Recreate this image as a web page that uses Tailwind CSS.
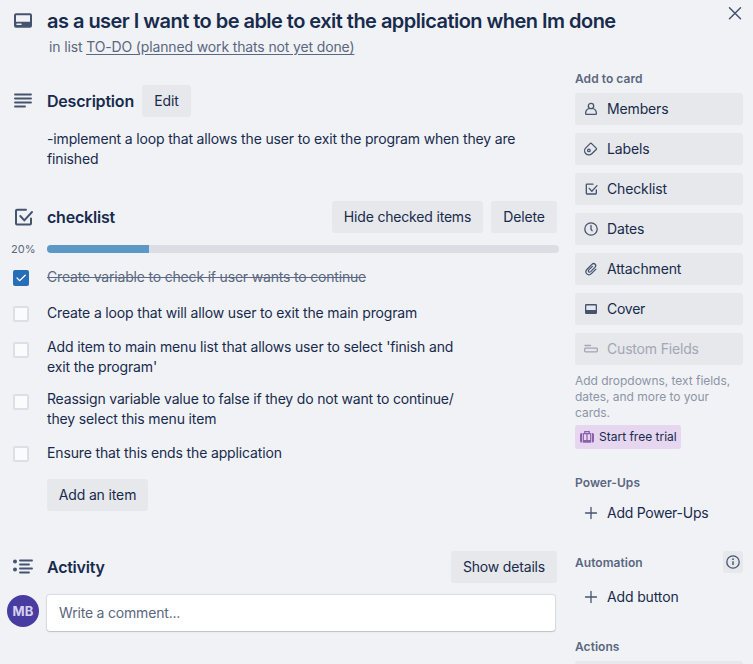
<!DOCTYPE html>
<html lang="en">
<head>
<meta charset="utf-8">
<title>Card details</title>
<script src="https://cdn.jsdelivr.net/npm/@tailwindcss/browser@4"></script>
</head>
<body class="bg-[#f1f2f6]">
<svg class="hidden">
  <symbol id="check" viewBox="0 0 24 24"><path d="M15 4.800H6a1 1 0 0 0-1 1v12.700a1 1 0 0 0 1 1h13a1 1 0 0 0 1-1V13.500M9.300 11l4 4.400L21 7" fill="none" stroke="currentColor" stroke-width="2" stroke-linecap="round" stroke-linejoin="round"/></symbol>
  <symbol id="plus" viewBox="0 0 16 16"><path d="M8 2.500v11M2.500 8h11" fill="none" stroke="currentColor" stroke-width="1.300" stroke-linecap="round"/></symbol>
</svg>
<div class="flex h-[664px] w-[753px] overflow-hidden bg-[#f1f2f6] font-['Inter','Liberation_Sans',sans-serif] text-sm leading-5 tracking-[-0.14px] whitespace-nowrap text-[#172b4d]">
  <main class="w-[575px] shrink-0">
    <header class="flex h-[85px] pl-[11px]">
      <svg class="mt-2 size-6 shrink-0 text-[#44546f]" viewBox="0 0 24 24"><path fill="currentColor" fill-rule="evenodd" d="M5 5.200h14a2 2 0 0 1 2 2V17.700a2 2 0 0 1-2 2H5a2 2 0 0 1-2-2V7.200a2 2 0 0 1 2-2zM5 7.200h14v6.600H5zM6 15.500h4a.7.700 0 0 1 0 1.500H6a.7.700 0 0 1 0-1.500z"/></svg>
      <div class="pt-[9px] pl-3">
        <h1 class="text-[20px] leading-6 font-semibold tracking-[-0.53px]">as a user I want to be able to exit the application when Im done</h1>
        <p class="mt-1 pl-[2px] text-[#5a6780]">in list <a class="underline underline-offset-2">TO-DO (planned work thats not yet done)</a></p>
      </div>
    </header>

    <section>
      <div class="flex h-8 items-center pl-[11px]">
        <svg class="size-6 text-[#44546f]" viewBox="0 0 24 24"><path d="M4 5.500h16M4 9.500h16M4 13.500h16M4 17.500h10" stroke="currentColor" stroke-width="1.900" stroke-linecap="round"/></svg>
        <h2 class="w-[107px] shrink-0 pl-3 text-base font-semibold tracking-[-0.2px]">Description</h2>
        <button class="h-8 w-[49px] rounded-[3px] bg-[#e7e8eb]">Edit</button>
      </div>
      <p class="pt-3 pl-[47px] tracking-[-0.155px]">-implement a loop that allows the user to exit the program when they are<br>finished</p>
    </section>

    <section class="pt-8">
      <div class="flex h-8 items-center pr-[18px] pl-[11px]">
        <svg class="size-6 text-[#44546f]"><use href="#check"/></svg>
        <h2 class="grow pl-3 text-base font-semibold tracking-[-0.2px]">checklist</h2>
        <button class="mr-2 h-8 w-[151px] rounded-[3px] bg-[#e7e8eb] tracking-[-0.18px]">Hide checked items</button>
        <button class="h-8 w-[66px] rounded-[3px] bg-[#e7e8eb]">Delete</button>
      </div>
      <div class="mt-[6px] flex h-5 items-center pl-[11px] text-[11px] text-[#5a6780]">
        <span class="w-9 tracking-normal">20%</span>
        <div class="h-2 w-[512px] overflow-hidden rounded-full bg-[#dddee3]"><div class="h-full bg-[#5b98c8]" style="width:20%"></div></div>
      </div>
      <ul class="pt-[3px]">
        <li class="flex h-9 pl-[13px]">
          <span class="mt-2 mr-[18px] size-4 rounded-[2px] bg-[#266eb8] text-white"><svg viewBox="0 0 16 16"><path d="M4 8l2.700 2.700L12.200 5.200" fill="none" stroke="currentColor" stroke-width="1.300" stroke-linecap="round"/></svg></span>
          <span class="pt-[5px] tracking-[-0.185px] text-[#5a6780] line-through">Create variable to check if user wants to continue</span>
        </li>
        <li class="flex h-9 pl-[13px]"><span class="mt-2 mr-[18px] size-4 rounded-[2px] border-2 border-[#dddfe4] bg-[#fafbfc]"></span><span class="pt-[5px] tracking-[-0.155px]">Create a loop that will allow user to exit the main program</span></li>
        <li class="flex h-[52px] pl-[13px]"><span class="mt-2 mr-[18px] size-4 rounded-[2px] border-2 border-[#dddfe4] bg-[#fafbfc]"></span><span class="pt-[3px] tracking-[-0.15px]">Add item to main menu list that allows user to select 'finish and<br>exit the program'</span></li>
        <li class="flex h-[52px] pl-[13px]"><span class="mt-2 mr-[18px] size-4 rounded-[2px] border-2 border-[#dddfe4] bg-[#fafbfc]"></span><span class="pt-[3px]"><span class="tracking-[-0.185px]">Reassign variable value to false if they do not want to continue/</span><br>they select this menu item</span></li>
        <li class="flex h-9 pl-[13px]"><span class="mt-2 mr-[18px] size-4 rounded-[2px] border-2 border-[#dddfe4] bg-[#fafbfc]"></span><span class="pt-[5px]">Ensure that this ends the application</span></li>
      </ul>
      <button class="mt-[5px] ml-[47px] block h-8 w-[101px] rounded-[3px] bg-[#e7e8eb]">Add an item</button>
    </section>

    <section class="pt-10">
      <div class="flex h-8 items-center pr-[18px] pl-[11px]">
        <svg class="size-6 text-[#44546f]" viewBox="0 0 24 24"><path d="M9 5.500h12M9 9.500h9M9 13.500h12M9 17.500h9" stroke="currentColor" stroke-width="1.900" stroke-linecap="round"/><circle cx="4" cy="6.500" r="2" fill="currentColor"/><circle cx="4" cy="14.500" r="2" fill="currentColor"/></svg>
        <h2 class="grow pl-3 text-base font-semibold tracking-[-0.25px]">Activity</h2>
        <button class="h-8 w-[106px] rounded-[3px] bg-[#e7e8eb] tracking-[-0.18px]">Show details</button>
      </div>
      <div class="flex pt-3 pl-[7px]">
        <span class="flex size-8 items-center justify-center rounded-full bg-[#493ca0] text-[13px] font-bold tracking-[0.2px] text-[#d6d2ee]">MB</span>
        <div class="ml-2 h-9 w-[508px] rounded-[3px] bg-white px-3 py-2 tracking-[-0.19px] text-[#5a6780] shadow-[0_1px_1px_#091e4220,0_0_1px_1px_#091e421c]">Write a comment...</div>
      </div>
    </section>
  </main>

  <aside class="relative w-[168px] shrink-0">
    <svg class="absolute top-[5px] left-[152px] size-4 text-[#44546f]" viewBox="0 0 16 16"><path d="M2.500 2.700l11 11M13.500 2.700l-11 11" stroke="currentColor" stroke-width="1.500" stroke-linecap="round"/></svg>
    <h3 class="pt-[71px] text-xs leading-4 font-semibold tracking-[0.05px] text-[#5a6780]">Add to card</h3>
    <div class="flex flex-col gap-2 pt-[6px]">
      <button class="flex h-8 items-center gap-2 rounded-[3px] bg-[#e7e8eb] pl-2"><svg class="size-4 text-[#44546f]" viewBox="0 0 16 16"><g fill="none" stroke="currentColor" stroke-width="1.300"><circle cx="8" cy="5" r="2.700"/><path stroke-linejoin="round" d="M5.800 7.500C3.800 8.300 2.600 10 2.600 12.500q0 .9.900.9h9q.9 0 .9-.9c0-2.500-1.200-4.200-3.200-5"/></g></svg>Members</button>
      <button class="flex h-8 items-center gap-2 rounded-[3px] bg-[#e7e8eb] pl-2"><svg class="size-4 text-[#44546f]" viewBox="0 0 16 16"><g fill="none" stroke="currentColor" stroke-width="1.300"><path stroke-linejoin="round" d="M2.800 6.900L7.100 2.600q.7-.7 1.500 0L13.200 7.100q.7.700 0 1.400L8.800 12.700A4.100 4.100 0 1 1 2.800 6.900z"/><circle cx="5.900" cy="9.400" r="1.300"/></g></svg>Labels</button>
      <button class="flex h-8 items-center gap-2 rounded-[3px] bg-[#e7e8eb] pl-2"><svg class="size-4 text-[#44546f]"><use href="#check"/></svg>Checklist</button>
      <button class="flex h-8 items-center gap-2 rounded-[3px] bg-[#e7e8eb] pl-2"><svg class="size-4 text-[#44546f]" viewBox="0 0 16 16"><g fill="none" stroke="currentColor" stroke-width="1.300" stroke-linecap="round"><circle cx="8" cy="8" r="6.200"/><path d="M8 4.500V8.200l1.100 1.500"/></g></svg>Dates</button>
      <button class="flex h-8 items-center gap-2 rounded-[3px] bg-[#e7e8eb] pl-2"><svg class="size-4 text-[#44546f]" viewBox="0 0 16 16"><path fill="none" stroke="currentColor" stroke-width="1.250" stroke-linecap="round" d="M12.900 8.100L8.600 12.400c-3.500 3.400-7.700-.8-4.500-4.200L8.900 3.400c2.400-2.200 5.200.7 3 3L7.700 10.600c-1.500 1.400-3.200-.2-1.900-1.700L9.400 5.400"/></svg>Attachment</button>
      <button class="flex h-8 items-center gap-2 rounded-[3px] bg-[#e7e8eb] pl-2 tracking-[-0.25px]"><svg class="size-4 text-[#44546f]" viewBox="0 0 16 16"><path fill="currentColor" fill-rule="evenodd" d="M3.200 3h9.600Q14 3 14 4.200v7.600q0 1.200-1.200 1.200H3.200Q2 13 2 11.800V4.200Q2 3 3.200 3zM3.300 4.400h9.400V9H3.300z"/></svg>Cover</button>
      <button class="flex h-8 items-center gap-2 rounded-[3px] bg-[#e7e8eb] pl-2 tracking-[-0.18px] text-[#a0a7b5]"><svg class="size-4" viewBox="0 0 16 16"><path d="M2 4.500h5.500M2.500 7.200h11q.8 0 .8.800v2q0 .8-.8.800h-11q-.8 0-.8-.8V8q0-.8.800-.8z" fill="none" stroke="currentColor" stroke-width="1.300" stroke-linecap="round"/></svg>Custom Fields</button>
    </div>
    <p class="pt-2 text-xs leading-4 tracking-[-0.03px] text-[#8c95a6]">Add dropdowns, text fields,<br>dates, and more to your<br>cards.</p>
    <button class="mt-1 flex h-6 w-[106px] items-center gap-1 rounded-[3px] bg-[#e6d6f0] pl-1 text-xs tracking-normal"><svg class="size-4 shrink-0 text-[#8b5fab]" viewBox="0 0 16 16"><path fill="currentColor" d="M3 4v9.500H2.500A1.500 1.500 0 0 1 1 12V5.500A1.500 1.500 0 0 1 2.500 4zM13 4v9.500h.5A1.500 1.500 0 0 0 15 12V5.500A1.500 1.500 0 0 0 13.500 4z"/><path d="M4.300 4.600h7.400v8.200H4.300zM5.700 4.300V2.600h4.600v1.700M8 5v7.500" fill="none" stroke="currentColor" stroke-width="1.200"/><path fill="currentColor" d="M4 11h8v2.500H4z"/></svg>Start free trial</button>

    <h3 class="pt-[26px] text-xs leading-4 font-semibold tracking-[0.05px] text-[#5a6780]">Power-Ups</h3>
    <button class="mt-[6px] flex h-8 items-center gap-2 pl-2 tracking-[-0.25px]"><svg class="size-4 text-[#44546f]"><use href="#plus"/></svg>Add Power-Ups</button>
    <div class="mt-[22px] flex h-[22px] items-center justify-between">
      <h3 class="pt-[2px] text-xs leading-4 font-semibold tracking-[0.05px] text-[#5a6780]">Automation</h3>
      <span class="flex h-[22px] w-5 items-center justify-center rounded-[3px] bg-[#e7e8eb]"><svg class="size-4 text-[#44546f]" viewBox="0 0 16 16"><circle cx="8" cy="8" r="6.200" fill="none" stroke="currentColor" stroke-width="1.300"/><path d="M8 7.300v3.800" stroke="currentColor" stroke-width="1.400"/><circle cx="8" cy="5.200" r=".9" fill="currentColor"/></svg></span>
    </div>
    <button class="mt-2 flex h-8 items-center gap-2 pl-2"><svg class="size-4 text-[#44546f]"><use href="#plus"/></svg>Add button</button>
    <h3 class="pt-[26px] text-xs leading-4 font-semibold tracking-[0.05px] text-[#5a6780]">Actions</h3>
    <div class="mt-[6px] h-8 rounded-[3px] bg-[#e7e8eb]"></div>
  </aside>
</div>
</body>
</html>
